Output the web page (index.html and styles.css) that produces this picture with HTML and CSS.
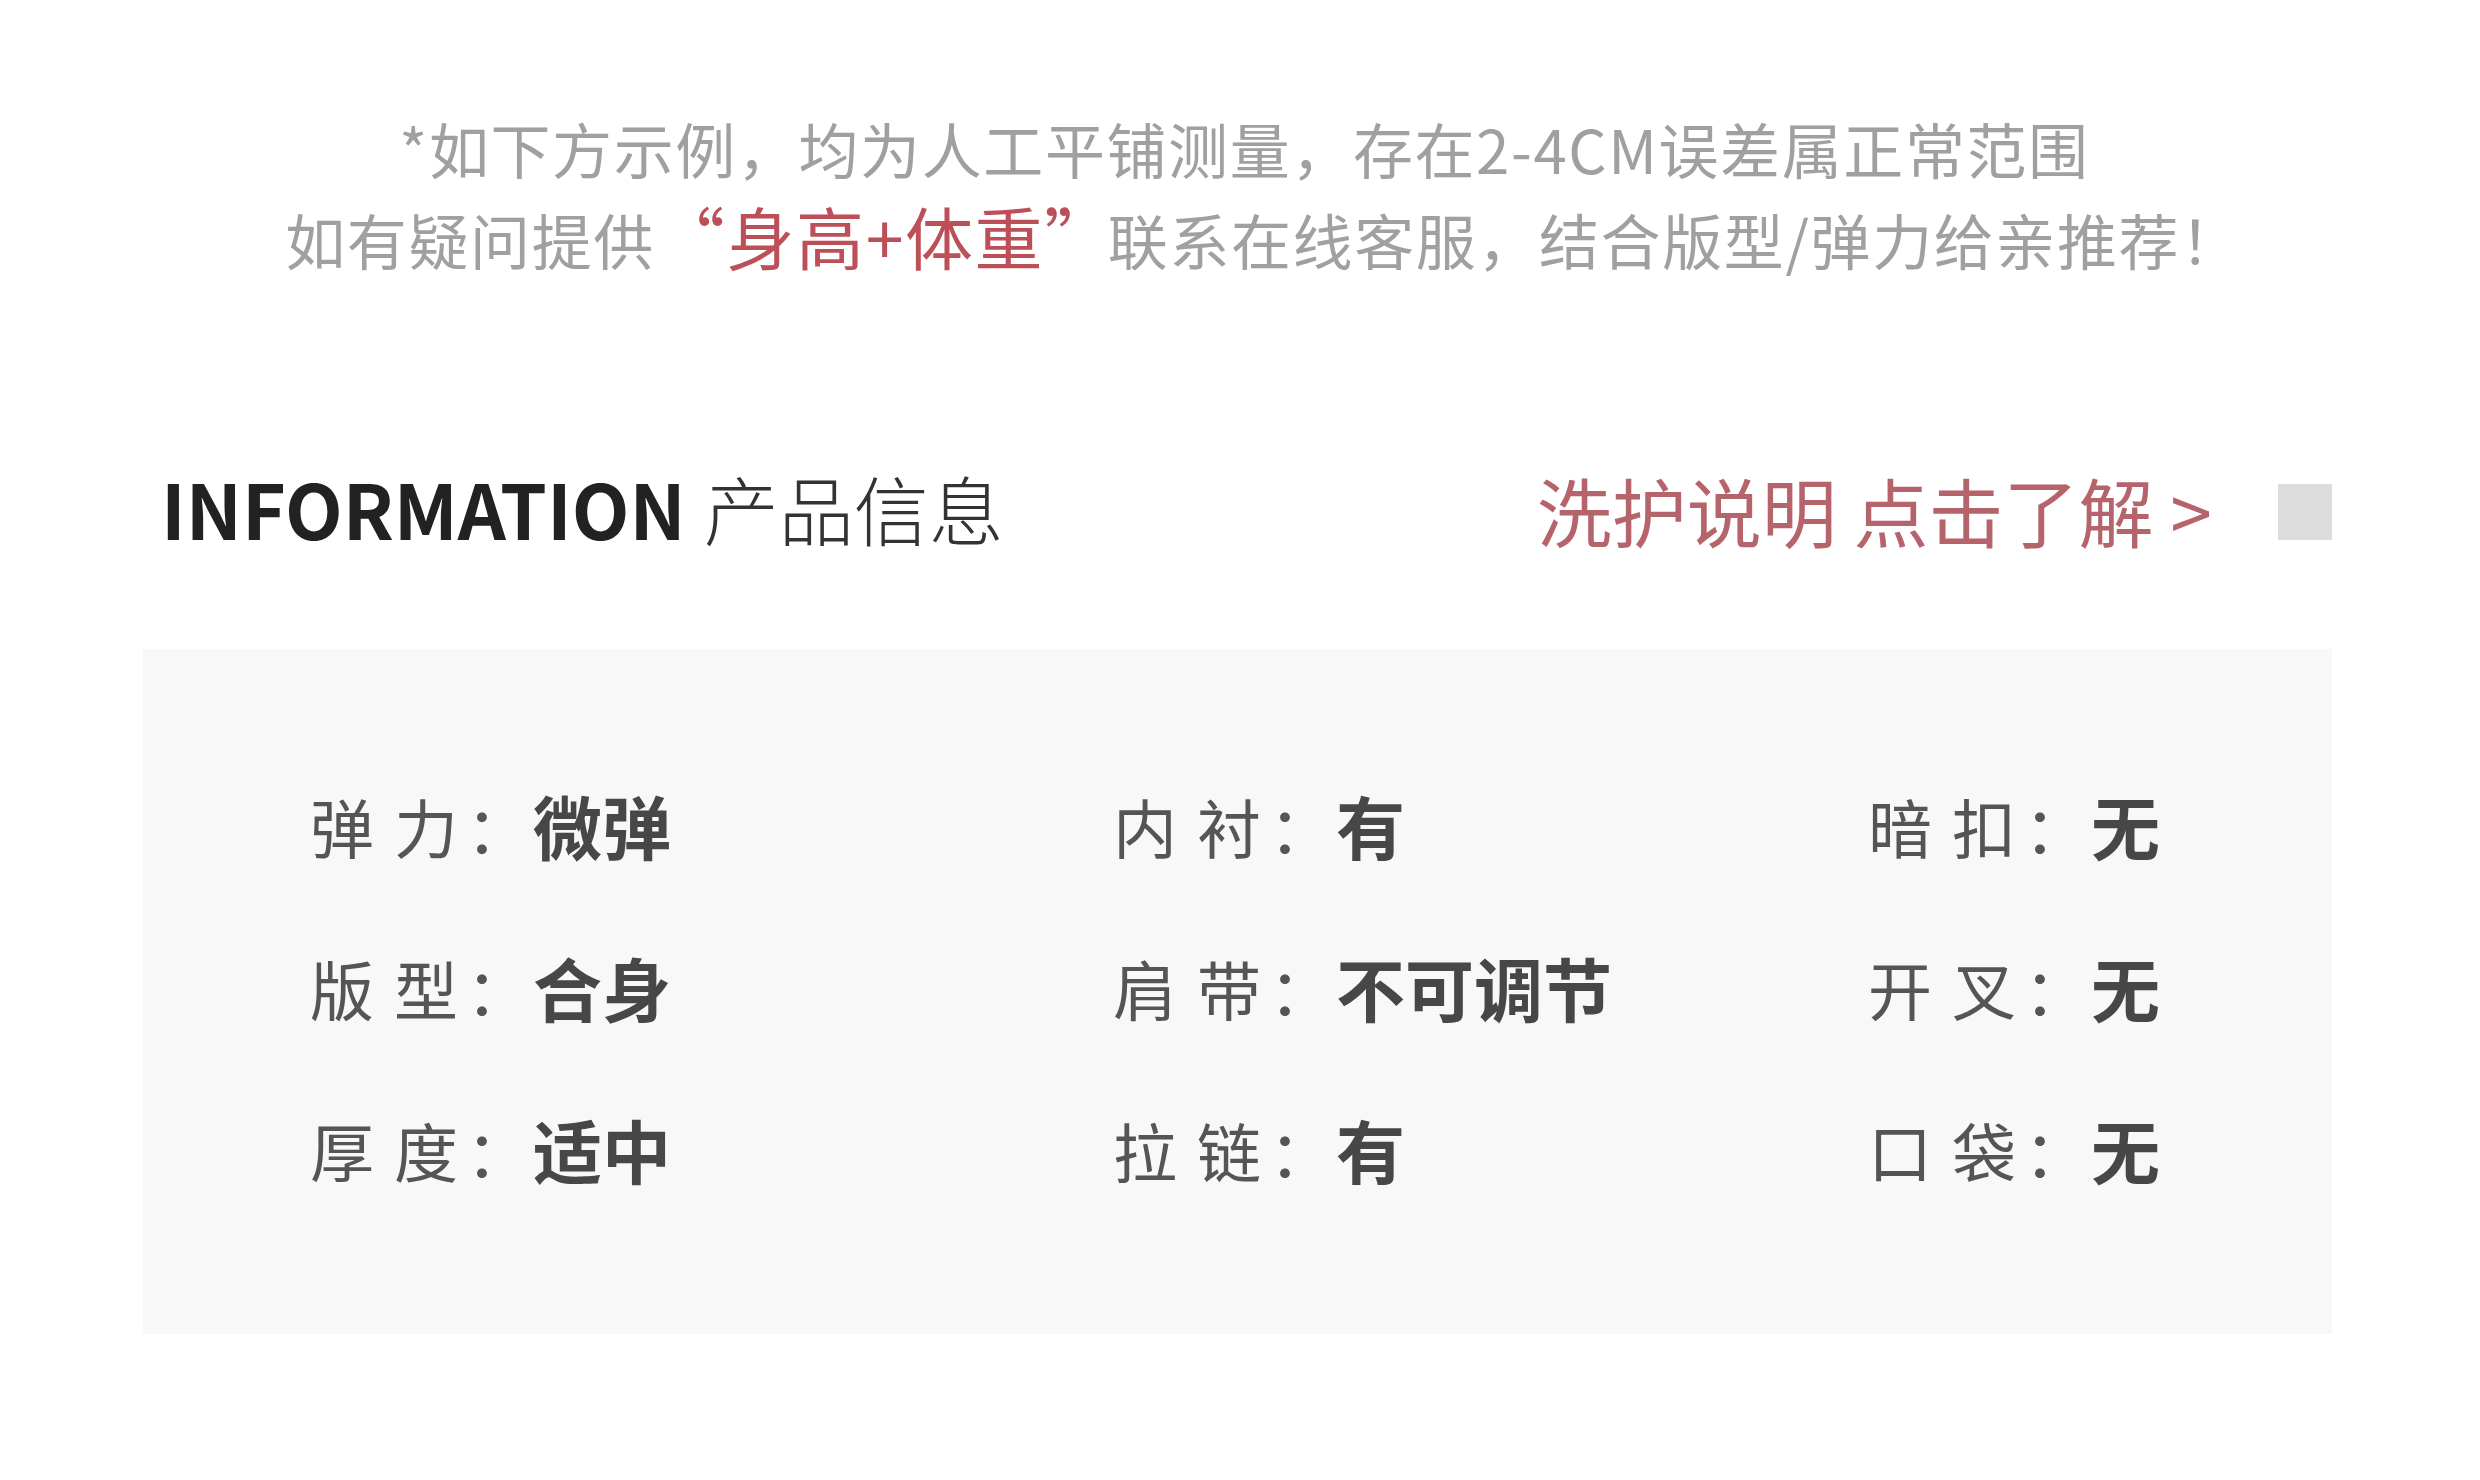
FILE: index.html
```html
<!DOCTYPE html>
<html lang="zh-CN">
<head>
<meta charset="utf-8">
<title>产品信息</title>
<link rel="stylesheet" href="styles.css">
</head>
<body>
<div class="page">
  <div class="notice">
    <p class="notice-line">*如下方示例，均为人工平铺测量，存在2-4CM误差属正常范围</p>
    <p class="notice-line notice-line-2">如有疑问提供<span class="hl">“身高+体重”</span>联系在线客服，结合版型/弹力给亲推荐！</p>
  </div>

  <div class="head">
    <div class="title"><span class="title-en">INFORMATION</span><span class="title-cn">产品信息</span></div>
    <div class="head-right">
      <span class="care">洗护说明 点击了解 &gt;</span>
      <span class="square"></span>
    </div>
  </div>

  <div class="panel">
    <div class="grid">
      <div class="item"><span class="key"><span class="k1">弹</span>力</span><span class="colon">：</span><span class="val">微弹</span></div>
      <div class="item"><span class="key"><span class="k1">内</span>衬</span><span class="colon">：</span><span class="val">有</span></div>
      <div class="item"><span class="key"><span class="k1">暗</span>扣</span><span class="colon">：</span><span class="val">无</span></div>
      <div class="item"><span class="key"><span class="k1">版</span>型</span><span class="colon">：</span><span class="val">合身</span></div>
      <div class="item"><span class="key"><span class="k1">肩</span>带</span><span class="colon">：</span><span class="val">不可调节</span></div>
      <div class="item"><span class="key"><span class="k1">开</span>叉</span><span class="colon">：</span><span class="val">无</span></div>
      <div class="item"><span class="key"><span class="k1">厚</span>度</span><span class="colon">：</span><span class="val">适中</span></div>
      <div class="item"><span class="key"><span class="k1">拉</span>链</span><span class="colon">：</span><span class="val">有</span></div>
      <div class="item"><span class="key"><span class="k1">口</span>袋</span><span class="colon">：</span><span class="val">无</span></div>
    </div>
  </div>
</div>
</body>
</html>
```

FILE: styles.css
```css
html, body {
  margin: 0;
  padding: 0;
  background: #ffffff;
}

body {
  font-family: "Noto Sans CJK SC", "Noto Sans", sans-serif;
  width: 2480px;
  height: 1480px;
  overflow: hidden;
}

.page {
  padding: 104px 148px 0 143px;
}

.notice {
  text-align: center;
  color: #a0a0a0;
  font-size: 60px;
  line-height: 88px;
  letter-spacing: 1.6px;
  padding-left: 14px;
}

.notice-line {
  margin: 0;
  white-space: nowrap;
}

.notice-line-2 {
  padding-left: 38px;
}

.hl {
  color: #bd4f59;
  font-size: 68px;
  margin-left: 2px;
  margin-right: -6px;
}

.head {
  margin-top: 174px;
  height: 100px;
  display: flex;
  align-items: center;
  justify-content: space-between;
}

.title {
  display: flex;
  align-items: baseline;
  padding-left: 18px;
}

.title-en {
  font-size: 75px;
  font-weight: 700;
  color: #222222;
}

.title-cn {
  font-size: 75px;
  font-weight: 300;
  color: #333333;
  margin-left: 18px;
}

.head-right {
  display: flex;
  align-items: center;
  position: relative;
  top: 2px;
}

.care {
  font-size: 75px;
  color: #b5646c;
}

.square {
  width: 54px;
  height: 56px;
  background: #dcdcdc;
  margin-left: 66px;
  position: relative;
  top: 3px;
}

.panel {
  margin-top: 92px;
  height: 685px;
  background: #f8f8f8;
  box-sizing: border-box;
  padding: 136px 0 0 167px;
}

.grid {
  display: grid;
  grid-template-columns: 803px 755px 1fr;
  row-gap: 82px;
}

.item {
  display: flex;
  align-items: center;
  height: 80px;
  font-size: 64px;
  white-space: nowrap;
}

.key {
  color: #555555;
}

.k1 {
  margin-right: 20px;
}

.colon {
  color: #555555;
  margin-left: 8px;
  margin-right: 3px;
}

.val {
  color: #474747;
  font-weight: 700;
  font-size: 69px;
}
```
